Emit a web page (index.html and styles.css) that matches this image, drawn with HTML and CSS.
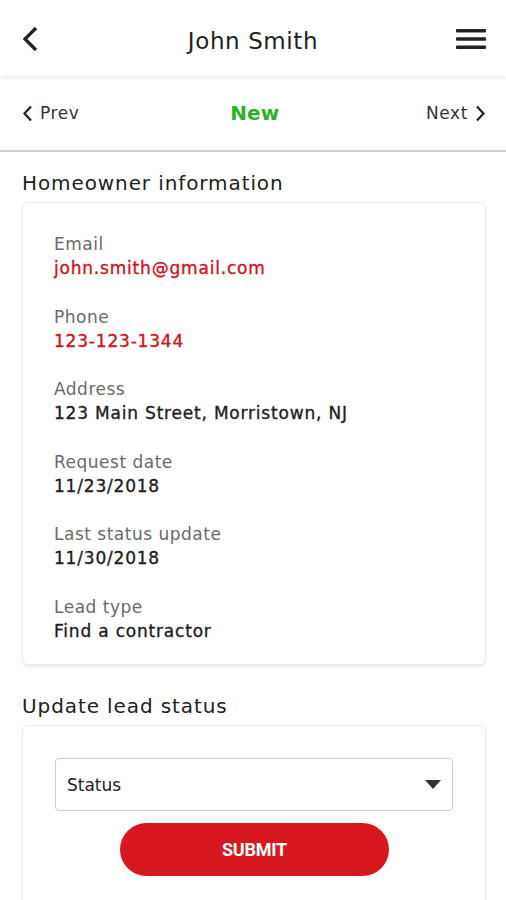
FILE: index.html
```html
<!DOCTYPE html>
<html lang="en">
  <head>
    <meta charset="UTF-8" />
    <meta name="viewport" content="width=device-width, initial-scale=1.0" />
    <title>John Smith</title>
    <link rel="stylesheet" href="styles.css">
  </head>
  <body>
    <header class="topbar">
      <div class="side">
        <svg class="back" width="18" height="26" viewBox="0 0 18 26">
          <path d="M15 2 L4 13 L15 24" fill="none" stroke="#222" stroke-width="3.2" />
        </svg>
      </div>
      <h1 class="title">John Smith</h1>
      <div class="side right">
        <svg class="menu" width="30" height="22" viewBox="0 0 30 22">
          <rect x="0" y="1" width="30" height="3.4" rx="1" fill="#222" />
          <rect x="0" y="9.3" width="30" height="3.4" rx="1" fill="#222" />
          <rect x="0" y="17.6" width="30" height="3.4" rx="1" fill="#222" />
        </svg>
      </div>
    </header>

    <nav class="pager">
      <a class="pageLink">
        <svg width="11" height="17" viewBox="0 0 11 17">
          <path d="M9 1.5 L2.5 8.5 L9 15.5" fill="none" stroke="#222" stroke-width="2.2" />
        </svg>
        Prev
      </a>
      <span class="status">New</span>
      <a class="pageLink">
        Next
        <svg width="11" height="17" viewBox="0 0 11 17">
          <path d="M2 1.5 L8.5 8.5 L2 15.5" fill="none" stroke="#222" stroke-width="2.2" />
        </svg>
      </a>
    </nav>

    <main class="content">
      <h2 class="sectionTitle">Homeowner information</h2>
      <div class="card info">
        <div class="field">
          <div class="label">Email</div>
          <div class="value red">john.smith@gmail.com</div>
        </div>
        <div class="field">
          <div class="label">Phone</div>
          <div class="value red">123-123-1344</div>
        </div>
        <div class="field">
          <div class="label">Address</div>
          <div class="value">123 Main Street, Morristown, NJ</div>
        </div>
        <div class="field">
          <div class="label">Request date</div>
          <div class="value">11/23/2018</div>
        </div>
        <div class="field">
          <div class="label">Last status update</div>
          <div class="value">11/30/2018</div>
        </div>
        <div class="field">
          <div class="label">Lead type</div>
          <div class="value">Find a contractor</div>
        </div>
      </div>

      <h2 class="sectionTitle second">Update lead status</h2>
      <div class="card update">
        <div class="select">
          <span>Status</span>
          <svg width="16" height="10" viewBox="0 0 16 10">
            <path d="M0 0 H16 L8 9 Z" fill="#333" />
          </svg>
        </div>
        <button class="submit">SUBMIT</button>
      </div>
    </main>
  </body>
</html>
```

FILE: styles.css
```css
* {
  margin: 0;
  padding: 0;
  box-sizing: border-box;
  font-family: "DejaVu Sans", "Open Sans", sans-serif;
}

html,
body {
  width: 506px;
  height: 900px;
  overflow: hidden;
  background: #fff;
}

.topbar {
  height: 76px;
  display: flex;
  align-items: center;
  padding: 0 20px 0 20px;
  box-shadow: 0 3px 3px rgba(0, 0, 0, 0.06);
  position: relative;
  z-index: 1;
}

.side {
  flex: 1;
  display: flex;
  align-items: center;
}

.side.right {
  justify-content: flex-end;
}

.back {
  margin-left: 1px;
  margin-top: 1px;
}

.menu {
  margin-top: 2px;
}

.title {
  font-size: 23px;
  line-height: 30px;
  font-weight: normal;
  color: #222;
  margin-top: 6px;
  letter-spacing: 0.6px;
}

.pager {
  height: 76px;
  display: flex;
  align-items: center;
  justify-content: space-between;
  padding: 0 20px 0 22px;
  border-bottom: 2px solid #cfcfcf;
}

.pageLink {
  display: flex;
  align-items: center;
  gap: 7px;
  font-size: 17px;
  letter-spacing: 0.6px;
  color: #333;
}

.status {
  font-size: 20px;
  font-weight: bold;
  color: #2bb02b;
  margin-left: 4px;
}

.content {
  padding: 19px 20px 0 22px;
}

.sectionTitle {
  font-size: 20px;
  letter-spacing: 0.9px;
  font-weight: normal;
  color: #222;
  line-height: 24px;
  margin-bottom: 7px;
}

.sectionTitle.second {
  margin-top: 29px;
}

.card {
  background: #fff;
  border: 1px solid #ececec;
  border-radius: 6px;
  box-shadow: 0 2px 3px rgba(0, 0, 0, 0.08);
}

.info {
  height: 463px;
  padding: 29px 31px 0 31px;
  display: flex;
  flex-direction: column;
  gap: 24.6px;
}

.label {
  font-size: 17px;
  letter-spacing: 0.5px;
  line-height: 24px;
  color: #6a6a6a;
}

.value {
  font-size: 17px;
  letter-spacing: 0.8px;
  line-height: 24px;
  color: #1e1e1e;
  -webkit-text-stroke: 0.35px #1e1e1e;
}

.value.red {
  color: #d0121b;
  -webkit-text-stroke: 0.35px #d0121b;
}

.update {
  height: 200px;
  padding: 32px 32px 0 32px;
  display: flex;
  flex-direction: column;
  align-items: center;
  gap: 12px;
}

.select {
  width: 100%;
  height: 53px;
  border: 1px solid #cfcfcf;
  border-radius: 4px;
  display: flex;
  align-items: center;
  justify-content: space-between;
  padding: 0 11px 0 11px;
  font-size: 17px;
  color: #222;
}

.submit {
  width: 269px;
  height: 53px;
  border: none;
  border-radius: 27px;
  background: #d6181f;
  color: #fff;
  font-family: Roboto, sans-serif;
  font-weight: bold;
  font-size: 18px;
  letter-spacing: -0.2px;
  margin-left: 1px;
}
```
